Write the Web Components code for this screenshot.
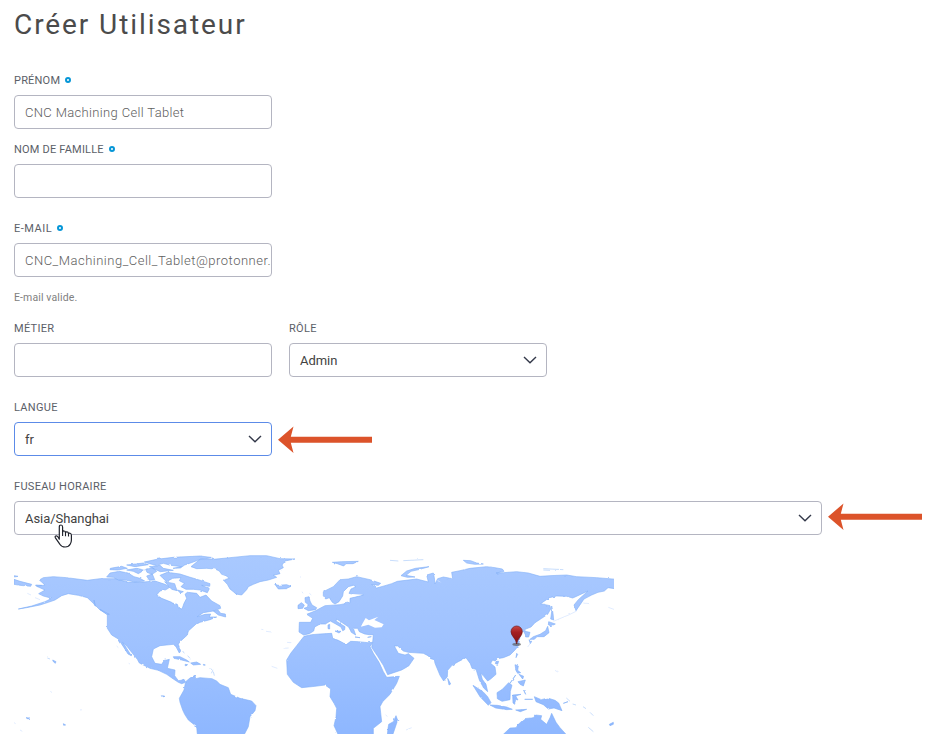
<!DOCTYPE html>
<html lang="fr">
<head>
<meta charset="utf-8">
<title>Créer Utilisateur</title>
<style>
html,body{margin:0;background:#fff;overflow:hidden}
body{width:944px;height:734px;font-family:Roboto,"Liberation Sans",sans-serif;color:#4a4a4a}
</style>
</head>
<body>
<user-page></user-page>
<script>
class BaseElement extends HTMLElement {
  constructor(){ super(); this.attachShadow({mode:'open'}); }
  connectedCallback(){ this.shadowRoot.innerHTML = this.render(); }
}

class FormField extends BaseElement {
  render(){
    const a = n => this.getAttribute(n) || '';
    return `<style>
      :host{display:block;width:258px;flex:none}
      .label{display:flex;align-items:center;gap:5px;height:20px;margin-bottom:5px;font-size:11px;letter-spacing:var(--ls,.3px);color:#5b6068;white-space:nowrap}
      .dot{box-sizing:border-box;width:6px;height:6px;border:2px solid #0696d7;border-radius:50%}
      .box{box-sizing:border-box;height:34px;border:1px solid #b4b5c1;border-radius:4px;display:flex;align-items:center;justify-content:space-between;padding:0 10px;font-size:13px;overflow:hidden;white-space:nowrap;background:#fff}
      :host([focused]) .box{border-color:#5c8be8}
      .text{font-weight:300;color:#606060;letter-spacing:var(--vs,.34px)}
      .pick{font-size:13px;color:#424242;letter-spacing:var(--vs,-.05px)}
      svg{flex:none;margin-right:-1px}
    </style>
    <div class="label"><span>${a('label')}</span>${this.hasAttribute('required')?'<i class="dot"></i>':''}</div>
    <div class="box"><span class="${this.hasAttribute('select')?'pick':'text'}"><slot></slot></span>
    ${this.hasAttribute('select')?'<svg width="14" height="8" viewBox="0 0 14 8"><path d="M1 1 L7 6.8 L13 1" fill="none" stroke="#34394a" stroke-width="1.4"/></svg>':''}</div>`;
  }
}
customElements.define('form-field', FormField);

class NoteArrow extends BaseElement {
  render(){
    return `<style>:host{display:block;width:94px;height:28px;flex:none}svg{display:block}</style>
    <svg width="94" height="28" viewBox="0 0 94 28"><path d="M0 13.7 L15.5 .5 L12.8 10.7 H94 V16.7 H12.8 L15.5 27 Z" fill="#dc532a"/></svg>`;
  }
}
customElements.define('note-arrow', NoteArrow);

class HandCursor extends BaseElement {
  render(){
    return `<style>:host{display:block;width:19px;height:24px}svg{display:block}</style>
    <svg width="19" height="24" viewBox="0 0 19 24"><path d="M5.3 15.2 V3 Q5.3 1 7 1 Q8.6 1 8.6 3 V8 Q9 6.8 10.2 7 Q11.4 7.1 11.5 8.6 Q12 7.6 13.2 7.9 Q14.4 8.1 14.5 9.7 Q15.2 8.9 16.2 9.3 Q17.4 9.7 17.4 11.4 V16 Q17.4 18.2 16.3 20 Q14.8 23 11.2 23 Q7.6 23 5.8 20.2 L1.6 14.2 Q.6 12.6 1.7 12 Q3 11.3 4.2 13.2 Z" fill="#fff" stroke="#20232c" stroke-width="1.2" stroke-linejoin="round"/><path d="M8.6 8 V12 M11.5 8.6 V12.3 M14.5 9.7 V12.6" stroke="#20232c" stroke-width="1.1"/></svg>`;
  }
}
customElements.define('hand-cursor', HandCursor);

class WorldMap extends BaseElement {
  render(){
    return `<style>:host{display:block;width:600px;height:189px}svg{display:block}</style>
    <svg width="600" height="189" viewBox="42 0 1800 567">
    <defs>
      <linearGradient id="sea" gradientUnits="userSpaceOnUse" x1="0" y1="30" x2="0" y2="567"><stop offset="0" stop-color="#a9c9ff"/><stop offset=".5" stop-color="#9fc2ff"/><stop offset="1" stop-color="#8eb7ff"/></linearGradient>
      <filter id="rough" filterUnits="userSpaceOnUse" x="42" y="0" width="1800" height="567" color-interpolation-filters="sRGB"><feTurbulence type="fractalNoise" baseFrequency=".06" numOctaves="2" seed="4" result="n"/><feDisplacementMap in="SourceGraphic" in2="n" scale="6" xChannelSelector="R" yChannelSelector="G"/><feGaussianBlur stdDeviation=".9"/></filter>
    </defs>
    <g filter="url(#rough)">
    <g fill="url(#sea)" stroke="#7faef6" stroke-width="1.8" stroke-linejoin="round">
      <!-- North America -->
      <path d="M118 105 L130 98 160 95 200 98 262 106 300 101 345 101 385 112 420 112 465 108 495 118 510 126 500 133 480 138 470 150 485 160 515 172 532 178 536 190 546 192 552 175 560 160 555 148 562 142 590 145 600 157 618 150 635 168 660 182 662 190 640 198 610 203 592 215 615 208 632 207 628 216 650 216 630 224 600 232 585 240 565 258 562 270 540 290 535 298 542 318 538 324 528 305 520 298 480 302 460 312 455 335 465 355 485 358 492 347 508 343 502 370 525 375 524 392 535 407 552 403 557 412 545 416 535 412 520 402 500 388 475 376 450 370 418 354 412 343 395 322 382 305 368 292 380 310 394 332 384 327 372 308 355 282 335 270 322 250 322 208 300 195 280 175 262 158 235 151 205 146 185 152 165 165 145 172 120 180 80 188 55 192 95 183 135 170 155 160 130 153 116 146 135 135 110 124 135 120Z"/>
      <path d="M42 103 L60 109 95 118 92 124 60 121 42 118Z M43 92 L54 94 43 96Z M107 120 L125 121 108 123Z M158 345 L168 350 166 355 160 350Z M78 518 L90 519 84 522Z M190 536 L197 540 191 541Z"/>
      <path d="M282 165 L287 184 283 180Z M300 193 L328 208 320 208Z M640 198 L655 196 662 205 676 207 677 216 655 210Z M520 335 L540 335 560 345 568 351 545 345 522 340Z M572 354 L590 351 602 358 580 360Z M555 358 L563 359 558 361Z M610 358 L616 360 611 361Z M484 452 L495 454 487 456Z"/>
      <!-- Canadian Arctic -->
      <path d="M320 96 L330 84 358 79 384 84 402 95 420 100 434 108 405 111 380 106 355 105 340 97Z M331 70 L365 64 382 70 353 75 330 74Z M380 60 L430 54 445 59 405 65Z M380 75 L410 70 433 75 415 86 400 79Z M437 73 L458 69 470 79 456 88 441 82Z M433 51 L470 43 520 37 600 33 640 38 600 43 580 51 554 60 541 69 519 70 545 65 512 61 490 55 468 61 449 56Z M448 65 L480 61 490 70 520 76 481 80 463 72Z M440 93 L457 87 464 104 448 106Z M480 91 L502 82 540 87 568 96 595 104 630 116 629 124 605 121 628 131 622 143 600 135 580 133 558 133 543 125 553 115 538 107 543 98 518 100 500 110 490 101Z M494 110 L524 116 531 137 515 133Z M532 135 L550 140 541 144Z"/>
      <!-- Greenland -->
      <path d="M573 65 L600 43 640 43 690 38 750 32 800 32 840 41 885 42 855 48 846 60 850 68 835 76 840 86 820 91 830 97 805 105 780 110 760 118 745 125 740 134 725 150 708 147 700 140 690 132 682 118 670 105 688 100 678 92 665 88 658 78 645 72 620 70 590 71Z"/>
      <path d="M824 117 L834 121 860 119 873 124 858 131 835 132Z"/>
      <!-- South America -->
      <path d="M557 410 L570 399 585 391 587 401 600 398 636 401 650 408 660 418 685 428 692 448 702 452 720 460 755 468 768 482 765 497 750 515 745 545 732 570 592 570 590 545 565 525 554 508 548 495 540 472 538 460 552 435Z"/>
      <!-- Africa -->
      <path d="M912 274 L935 269 960 267 995 265 998 280 1015 286 1030 294 1040 298 1052 289 1075 290 1104 293 1118 292 1110 305 1120 325 1137 352 1150 380 1160 397 1198 394 1190 415 1170 448 1148 470 1140 485 1145 530 1120 550 1120 570 1015 570 1002 542 1008 515 1010 490 1002 475 990 455 992 432 975 420 945 424 905 428 880 412 862 388 860 345 872 325 890 302Z M1188 512 L1193 526 1178 570 1162 570 1164 550 1166 538 1180 530Z"/>
      <!-- Europe and Asia -->
      <path d="M898 232 L932 232 938 220 920 208 945 198 975 182 1020 179 1050 173 1050 160 1090 150 1060 148 1047 145 1053 132 1068 125 1060 121 1045 125 1030 140 1028 153 1017 170 1005 177 997 172 988 158 977 162 970 152 970 140 1000 125 1020 104 1045 102 1070 95 1110 104 1142 115 1135 121 1115 119 1130 129 1155 122 1175 116 1192 109 1250 102 1285 111 1280 90 1300 84 1303 98 1305 117 1313 101 1330 96 1358 101 1355 82 1380 77 1410 70 1460 65 1485 68 1507 72 1512 79 1488 84 1510 83 1550 80 1585 84 1620 94 1650 92 1700 90 1730 95 1790 98 1850 103 1850 132 1824 128 1813 138 1794 142 1775 150 1752 162 1728 197 1722 180 1735 164 1764 138 1725 156 1718 159 1700 154 1670 153 1648 158 1622 176 1650 182 1652 192 1643 208 1625 220 1605 233 1593 246 1575 253 1575 259 1590 262 1586 276 1577 276 1573 261 1562 258 1552 255 1561 270 1558 285 1557 300 1545 315 1530 330 1510 338 1492 341 1485 348 1478 345 1472 355 1485 366 1488 388 1472 402 1463 408 1449 391 1442 385 1447 403 1458 418 1463 440 1451 429 1438 405 1428 373 1416 370 1411 356 1398 338 1375 350 1356 361 1343 376 1342 395 1331 408 1320 391 1305 355 1303 344 1292 341 1284 332 1270 325 1225 322 1210 318 1193 303 1183 303 1195 325 1215 330 1225 326 1242 340 1226 363 1205 375 1163 389 1150 361 1133 334 1115 307 1118 292 1120 269 1108 269 1094 267 1078 260 1073 250 1060 250 1067 270 1054 262 1046 246 1010 222 1008 228 1035 245 1034 254 1028 257 1023 246 1002 234 991 228 976 237 960 237 944 246 941 258 928 266 911 270 897 261Z"/>
      <!-- Islands around Europe and along the Arctic coast -->
      <path d="M915 158 L927 155 930 168 936 180 950 188 947 194 925 197 912 190 923 186 924 178 916 172Z M894 181 L904 173 913 180 908 190 894 191Z M984 240 L989 238 989 252 984 251Z M1005 258 L1023 259 1017 264Z M1065 276 L1080 278Z M1103 277 L1114 275Z M997 52 L1025 50 1075 49 1059 56 1038 56 1031 63 1012 56Z M1203 92 L1220 78 1246 70 1287 65 1260 73 1233 79 1218 91 1245 96 1222 97Z M1390 46 L1412 47 1430 54 1450 57 1424 58 1400 54Z"/>
      <!-- Eastern and southern islands -->
      <path d="M1655 183 L1659 205 1661 225 1652 222 1655 200Z M1646 230 L1666 237 1653 243 1645 239Z M1643 244 L1647 263 1632 275 1611 275 1603 283 1590 283 1600 275 1620 268 1637 257Z M1587 284 L1595 289 1591 296Z M1550 325 L1553 328 1548 338Z M1488 349 L1496 349 1493 358 1486 356Z M1343 400 L1352 417 1347 420Z M1419 421 L1435 431 1449 440 1463 455 1473 473 1465 481 1440 455Z M1470 480 L1492 481 1520 486 1537 493 1520 494 1487 489Z M1491 443 L1507 433 1526 413 1536 421 1531 439 1530 464 1506 469 1492 461Z M1545 359 L1555 363 1553 376 1562 383 1553 385 1548 377Z M1557 388 L1571 394 1568 402Z M1554 410 L1576 405 1570 423 1560 418Z M1530 415 L1547 390Z M1538 450 L1563 448 1547 453 1554 465 1547 463 1544 478 1539 474Z M1571 435 L1577 448Z M1574 463 L1598 463Z M1547 495 L1580 493 1561 500Z M1603 455 L1624 464 1643 459 1665 466 1676 474 1686 497 1662 489 1645 492 1630 479 1608 470Z M1690 475 L1704 470Z M1828 538 L1840 532 1840 538 1830 542Z"/>
      <path d="M1508 570 L1530 549 1548 548 1554 539 1573 521 1600 518 1607 510 1625 512 1622 523 1640 538 1650 518 1655 505 1668 532 1680 548 1700 570Z"/>
    </g>
    <g fill="#fff"><path d="M1083 245 L1085 240 1097 219 1107 226 1135 215 1123 225 1151 238 1145 247 1125 248 1105 239Z M1055 147 L1090 149 1058 155Z M1312 105 L1325 113 1314 108Z M1340 92 L1362 103 1347 97Z"/></g>
    <g fill="none" stroke="#a9c9fb" stroke-width="2.4" opacity=".8"><path d="M1699 459 L1710 469 M1718 477 L1728 480 M1749 485 L1758 491 M1770 502 L1780 512 M1765 547 L1780 560 M1170 46 L1195 48 M1210 47 L1270 44 M1630 71 L1690 74 M1630 75 L1650 76 M548 318 L553 325 M563 332 L570 340 M632 370 L638 377 634 385 M640 380 L643 392 M142 339 L150 342 M466 128 L480 130"/></g>
    <g fill="none" stroke="#bed6ff" stroke-width="2" opacity=".7"><path d="M82 145 L93 150 M105 158 L120 164 M350 303 L355 308 M386 355 L390 357 M784 253 L790 254 M798 259 L815 261 M900 96 L903 96 M150 440 L156 442 M240 494 L244 496 M851 310 L866 309 M861 292 L871 293 M815 364 L832 370 M906 140 L909 145 M928 145 L934 150 M1660 229 L1708 209 1730 198 M1750 174 L1770 176 M1825 187 L1844 194 M1665 376 L1673 381 M1594 291 L1583 306 M1218 555 L1235 548 M1157 509 L1162 515 M60 555 L67 559 M42 533 L47 536"/></g>
    </g>
    <g transform="translate(1550 299)"><ellipse cy="-1" rx="13" ry="5" fill="#555" opacity=".65"/><path d="M0 -2 C-2 -20 -17 -25 -17 -39 A17 17 0 0 1 17 -39 C17 -25 2 -20 0 -2Z" fill="url(#pin)" stroke="#6d1719" stroke-width="2"/></g>
    <defs><linearGradient id="pin" x1="0" y1="0" x2="0" y2="1"><stop offset="0" stop-color="#c94745"/><stop offset=".35" stop-color="#a52023"/><stop offset="1" stop-color="#7e1014"/></linearGradient></defs>
    </svg>`;
  }
}
customElements.define('world-map', WorldMap);

class UserPage extends BaseElement {
  render(){
    return `<style>
      :host{display:block;position:relative;box-sizing:border-box;width:944px;height:734px;padding-left:14px;overflow:hidden}
      h1{margin:0;height:70px;padding-top:5px;box-sizing:border-box;font-size:28px;line-height:40px;font-weight:400;letter-spacing:1.92px;color:#4b4b4b;white-space:nowrap}
      .form{display:flex;flex-direction:column}
      .g10{margin-top:10px}.g20{margin-top:20px}
      .help{height:20px;line-height:20px;margin:11px 0 10px;font-size:10.5px;letter-spacing:.12px;color:#808080}
      .row{display:flex;gap:17px}
      .noted{display:flex;align-items:flex-end;gap:6px}
      .wide{width:808px}
      .mid{margin-bottom:2px}
      .up{margin-bottom:4px}
      .given{--ls:.2px}
      .family{--ls:.2px}
      .mail{--ls:.5px;--vs:.5px}
      world-map{margin-top:10px}
      hand-cursor{position:absolute;left:54px;top:524px}
    </style>
    <h1>Créer Utilisateur</h1>
    <div class="form">
      <form-field class="given" label="PRÉNOM" required>CNC Machining Cell Tablet</form-field>
      <form-field class="g10 family" label="NOM DE FAMILLE" required></form-field>
      <form-field class="g20 mail" label="E-MAIL" required>CNC_Machining_Cell_Tablet@protonner.</form-field>
      <div class="help">E-mail valide.</div>
      <div class="row"><form-field label="MÉTIER"></form-field><form-field label="RÔLE" select>Admin</form-field></div>
      <div class="noted g20"><form-field label="LANGUE" select focused>fr</form-field><note-arrow class="mid"></note-arrow></div>
      <div class="noted g20"><form-field class="wide" label="FUSEAU HORAIRE" select>Asia/Shanghai</form-field><note-arrow class="up"></note-arrow></div>
    </div>
    <world-map></world-map>
    <hand-cursor></hand-cursor>`;
  }
}
customElements.define('user-page', UserPage);
</script>
</body>
</html>
